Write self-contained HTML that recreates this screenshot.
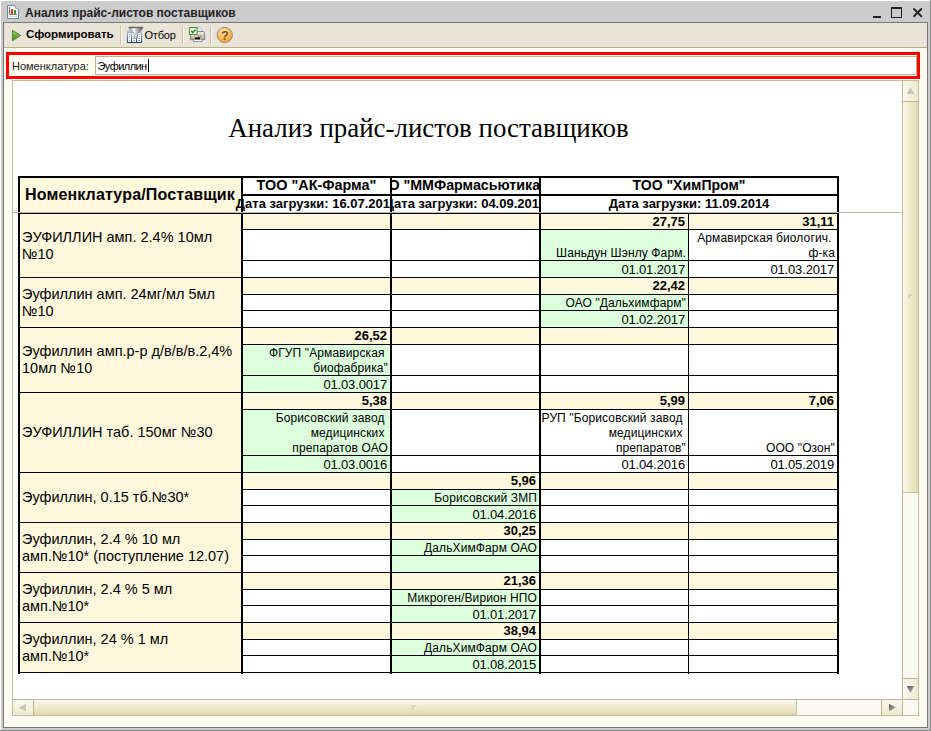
<!DOCTYPE html>
<html><head><meta charset="utf-8"><title>Анализ прайс-листов поставщиков</title>
<style>
*{box-sizing:border-box;margin:0;padding:0}
html,body{width:931px;height:731px;overflow:hidden;background:#cbcbcb;font-family:"Liberation Sans",sans-serif;color:#000}
#win{position:absolute;left:0;top:0;width:931px;height:731px;background:#cbcbcb}
#frame{position:absolute;left:3px;top:22px;width:925px;height:706px;background:#767676}
#form{position:absolute;left:4px;top:23px;width:923px;height:704px;background:#fffbf0}
#title{position:absolute;left:25px;top:6px;font:bold 12px "Liberation Sans",sans-serif;color:#222;white-space:nowrap;letter-spacing:0px}
#tb{position:absolute;left:4px;top:23px;width:923px;height:25px;background:#eae4d8;border-bottom:1px solid #b5af8c}
.sep{position:absolute;top:26px;width:2px;height:19px;border-left:1px solid #c9c2a9;border-right:1px solid #fbf9f2}
.tt{position:absolute;font-size:11px;white-space:nowrap;color:#000}
#red{position:absolute;left:6px;top:52px;width:914px;height:27px;border:3px solid #fd0000}
#inp{position:absolute;left:95px;top:56px;width:822px;height:19px;background:#fff;border:1px solid #b9b38f}
#sheet{position:absolute;left:12px;top:80px;width:907px;height:636px;background:#fff;border:1px solid #c4bd9c}
#sheet .abs,.c,.ln{position:absolute}
#tbl{position:absolute;left:0;top:0;width:931px;height:731px}
.c{overflow:hidden;white-space:nowrap}
.hc{text-align:center}
.h0{position:absolute;left:5px;top:8px;font:bold 16px "Liberation Sans",sans-serif;letter-spacing:0.15px}
.h1{font:bold 14px "Liberation Sans",sans-serif;line-height:16px;display:block;position:absolute;left:50%;top:-1px;transform:translateX(-50%)}
.h2{font:bold 13px "Liberation Sans",sans-serif;line-height:16px;display:block;position:absolute;left:50%;top:0px;transform:translateX(-50%)}
.labc{display:flex;align-items:center}
.lab{font-size:14.5px;line-height:17px;padding-left:2px}
.r{text-align:right;padding-right:3px}
.pr{font:bold 13px "Liberation Sans",sans-serif;line-height:16px;display:block}
.dt{font-size:13px;line-height:17px;display:block;letter-spacing:-0.15px}
.mnc{display:flex;align-items:flex-end;justify-content:flex-end}
.sl{position:absolute;background:#bcb694}
.sbtn{position:absolute}
.mn{font-size:12px;line-height:15px;text-align:right;padding-right:2px;letter-spacing:0.12px;position:relative;top:1px}
</style></head><body>
<div id="win">
<div style="position:absolute;left:0;top:0;width:931px;height:1px;background:#fff"></div><div style="position:absolute;left:0;top:0;width:1px;height:731px;background:#fff"></div><div style="position:absolute;left:930px;top:0;width:1px;height:731px;background:#8c8c8c"></div><div style="position:absolute;left:0;top:730px;width:931px;height:1px;background:#8c8c8c"></div><div id="frame"></div><div id="form"></div>
<div id="title">Анализ прайс-листов поставщиков</div>
<div id="tb"></div>
<svg style="position:absolute;left:0;top:0" width="931" height="50" viewBox="0 0 931 50">
<defs>
<linearGradient id="gplay" x1="0" y1="0" x2="0" y2="1"><stop offset="0" stop-color="#8ed45a"/><stop offset="1" stop-color="#3f8f1f"/></linearGradient>
<linearGradient id="gtab" x1="0" y1="0" x2="0" y2="1"><stop offset="0" stop-color="#c3d3ea"/><stop offset="0.5" stop-color="#6d8bbb"/><stop offset="1" stop-color="#1c3766"/></linearGradient>
<linearGradient id="gfun" x1="0" y1="0" x2="1" y2="0"><stop offset="0" stop-color="#8a8a8a"/><stop offset="0.35" stop-color="#ffffff"/><stop offset="0.6" stop-color="#b0b0b0"/><stop offset="1" stop-color="#555"/></linearGradient>
<radialGradient id="ghelp" cx="0.4" cy="0.3" r="0.8"><stop offset="0" stop-color="#fee3ae"/><stop offset="0.6" stop-color="#f9b84a"/><stop offset="1" stop-color="#f0a020"/></radialGradient>
<linearGradient id="gprn" x1="0" y1="0" x2="0" y2="1"><stop offset="0" stop-color="#f4f1ee"/><stop offset="1" stop-color="#b9a799"/></linearGradient>
</defs>
<!-- title icon -->
<path d="M7.5 5.5H15.5L18.5 8.5V18.5H7.5Z" fill="#fff" stroke="#6b87a8" stroke-width="1"/>
<path d="M15.5 5.5V8.5H18.5" fill="#dbe6f2" stroke="#9fb4cc" stroke-width="1"/>
<rect x="11" y="9" width="2" height="5" fill="#f0361a"/>
<rect x="14" y="10" width="2" height="4" fill="#2e9a1e"/>
<rect x="9" y="7" width="1" height="8" fill="#777"/>
<rect x="9" y="14" width="8" height="1" fill="#9a6a6a"/>
<rect x="9" y="16" width="8" height="1" fill="#c5d9ec"/>
<!-- window buttons -->
<rect x="873" y="16" width="8" height="2" fill="#222"/>
<rect x="891.5" y="8" width="10" height="9.5" fill="none" stroke="#222" stroke-width="1"/>
<rect x="891" y="7" width="11" height="2" fill="#222"/>
<path d="M914 9L921.3 16.2M921.3 9L914 16.2" stroke="#222" stroke-width="1.9" stroke-linecap="round"/>
<!-- play -->
<path d="M12.5 30.3V40.7L20.6 35.5Z" fill="url(#gplay)" stroke="#4c7a38" stroke-width="0.9" stroke-linejoin="round"/>
<!-- filter icon -->
<rect x="127" y="30" width="15" height="13" rx="0.8" fill="url(#gtab)"/>
<rect x="128" y="33" width="3" height="9" fill="#f4fbff"/>
<rect x="132" y="33" width="4" height="9" fill="#f4fbff"/>
<rect x="137" y="33" width="4" height="9" fill="#f4fbff"/>
<g fill="#9aa6c0"><rect x="129" y="34" width="1" height="1"/><rect x="129" y="36" width="1" height="1"/><rect x="129" y="38" width="1" height="1"/><rect x="129" y="40" width="1" height="1"/>
<rect x="139" y="34" width="1" height="1"/><rect x="139" y="36" width="1" height="1"/><rect x="138" y="38" width="2" height="1"/><rect x="138" y="40" width="2" height="1"/><rect x="133" y="40" width="2" height="1"/><rect x="133" y="38" width="1" height="1"/></g>
<path d="M129 27H143V28.3L137.6 33.5V38L134.2 38.8V33.5L129 28.3Z" fill="url(#gfun)" stroke="#666" stroke-width="0.6"/>
<rect x="129" y="27" width="14" height="1.2" fill="#6a6a6a"/>
<!-- printer icon -->
<rect x="198" y="28" width="3.4" height="6" fill="#eef4fb" stroke="#9db8d8" stroke-width="0.7"/>
<path d="M190.5 34H196.5L198 31.5H203.7L204.7 33V39.7H190.5Z" fill="url(#gprn)" stroke="#77777c" stroke-width="0.9"/>
<rect x="193.3" y="39" width="8.6" height="2.6" fill="#f6f6f6" stroke="#77777c" stroke-width="0.7"/>
<rect x="194.8" y="37.4" width="5.2" height="2" fill="#0a0a0a"/>
<rect x="197.8" y="35.3" width="1.4" height="1.4" fill="#e33"/>
<rect x="200" y="35.3" width="1.4" height="1.4" fill="#2a2"/>
<rect x="189.5" y="27.5" width="7.5" height="7" fill="#fff" stroke="#4a9a2a" stroke-width="1"/>
<path d="M191.2 30.8L192.8 32.6L195.6 29.4" fill="none" stroke="#2f8a1f" stroke-width="1.5"/>
<!-- help -->
<circle cx="224.8" cy="35" r="7.6" fill="url(#ghelp)" stroke="#8d7f73" stroke-width="0.9"/>
<text x="224.8" y="39.6" text-anchor="middle" font-family="Liberation Sans" font-weight="bold" font-size="12.5" fill="#7d4b1e">?</text>
</svg>
<div class="sep" style="left:120px"></div><div class="sep" style="left:182px"></div><div class="sep" style="left:210px"></div>
<div class="tt" style="left:26px;top:28px;font-weight:bold;font-size:11.5px;letter-spacing:0px">Сформировать</div>
<div class="tt" style="left:144.5px;top:29px;letter-spacing:-0.2px">Отбор</div>

<div id="red"></div><div id="inp"></div>
<div class="tt" style="left:12px;top:60px;color:#222">Номенклатура:</div>
<div class="tt" style="left:97.5px;top:60px;letter-spacing:-0.55px">Эуфиллин</div>
<div style="position:absolute;left:148px;top:59px;width:1px;height:13px;background:#000"></div>
<div id="sheet"></div>
<div id="tbl">
<div class="abs" style="position:absolute;left:228.3px;top:113px;font:26.9px 'Liberation Serif',serif;white-space:nowrap">Анализ прайс-листов поставщиков</div>
<div class="c" style="left:20px;top:178px;width:221px;height:35px;background:#fff8dc;"><div class="h0">Номенклатура/Поставщик</div></div>
<div class="c hc" style="left:243px;top:178px;width:147px;height:16px;background:#ffffff;"><span class="h1" style="font-size:14.4px;margin-left:0px">ТОО "АК-Фарма"</span></div>
<div class="c hc" style="left:243px;top:196px;width:147px;height:17px;background:#ffffff;"></div>
<div class="c hc" style="left:392px;top:178px;width:147px;height:16px;background:#ffffff;"><span class="h1" style="font-size:14.25px;margin-left:-3px">ТОО "ММФармасьютикал"</span></div>
<div class="c hc" style="left:392px;top:196px;width:147px;height:17px;background:#ffffff;"><span class="h2">Дата загрузки: 04.09.2014</span></div>
<div class="c hc" style="left:541px;top:178px;width:296px;height:16px;background:#ffffff;"><span class="h1" style="font-size:14px;margin-left:0px">ТОО "ХимПром"</span></div>
<div class="c hc" style="left:541px;top:196px;width:296px;height:17px;background:#ffffff;"><span class="h2">Дата загрузки: 11.09.2014</span></div>
<div class="c labc" style="left:20px;top:214px;width:221px;height:63px;background:#fff8dc;"><div class="lab">ЭУФИЛЛИН амп. 2.4% 10мл<br>№10</div></div>
<div class="c r" style="left:243px;top:214px;width:147px;height:15px;background:#fff8dc;"></div>
<div class="c mnc" style="left:243px;top:230px;width:147px;height:30px;background:#ffffff;"></div>
<div class="c r" style="left:243px;top:261px;width:147px;height:16px;background:#ffffff;"></div>
<div class="c r" style="left:392px;top:214px;width:147px;height:15px;background:#fff8dc;"></div>
<div class="c mnc" style="left:392px;top:230px;width:147px;height:30px;background:#ffffff;"></div>
<div class="c r" style="left:392px;top:261px;width:147px;height:16px;background:#ffffff;"></div>
<div class="c r" style="left:541px;top:214px;width:147px;height:15px;background:#fff8dc;"><span class="pr">27,75</span></div>
<div class="c mnc" style="left:541px;top:230px;width:147px;height:30px;background:#dcffdc;"><div class="mn">Шаньдун Шэнлу Фарм.</div></div>
<div class="c r" style="left:541px;top:261px;width:147px;height:16px;background:#dcffdc;"><span class="dt">01.01.2017</span></div>
<div class="c r" style="left:689px;top:214px;width:148px;height:15px;background:#fff8dc;"><span class="pr">31,11</span></div>
<div class="c mnc" style="left:689px;top:230px;width:148px;height:30px;background:#ffffff;"><div class="mn">Армавирская&nbsp;биологич.&nbsp;<br>ф-ка</div></div>
<div class="c r" style="left:689px;top:261px;width:148px;height:16px;background:#ffffff;"><span class="dt">01.03.2017</span></div>
<div class="c labc" style="left:20px;top:278px;width:221px;height:49px;background:#fff8dc;"><div class="lab">Эуфиллин амп. 24мг/мл 5мл<br>№10</div></div>
<div class="c r" style="left:243px;top:278px;width:147px;height:16px;background:#fff8dc;"></div>
<div class="c mnc" style="left:243px;top:295px;width:147px;height:15px;background:#ffffff;"></div>
<div class="c r" style="left:243px;top:311px;width:147px;height:16px;background:#ffffff;"></div>
<div class="c r" style="left:392px;top:278px;width:147px;height:16px;background:#fff8dc;"></div>
<div class="c mnc" style="left:392px;top:295px;width:147px;height:15px;background:#ffffff;"></div>
<div class="c r" style="left:392px;top:311px;width:147px;height:16px;background:#ffffff;"></div>
<div class="c r" style="left:541px;top:278px;width:147px;height:16px;background:#fff8dc;"><span class="pr">22,42</span></div>
<div class="c mnc" style="left:541px;top:295px;width:147px;height:15px;background:#dcffdc;"><div class="mn">ОАО "Дальхимфарм"</div></div>
<div class="c r" style="left:541px;top:311px;width:147px;height:16px;background:#dcffdc;"><span class="dt">01.02.2017</span></div>
<div class="c r" style="left:689px;top:278px;width:148px;height:16px;background:#fff8dc;"></div>
<div class="c mnc" style="left:689px;top:295px;width:148px;height:15px;background:#ffffff;"></div>
<div class="c r" style="left:689px;top:311px;width:148px;height:16px;background:#ffffff;"></div>
<div class="c labc" style="left:20px;top:328px;width:221px;height:64px;background:#fff8dc;"><div class="lab">Эуфиллин амп.р-р д/в/в/в.2,4%<br>10мл №10</div></div>
<div class="c r" style="left:243px;top:328px;width:147px;height:16px;background:#fff8dc;"><span class="pr">26,52</span></div>
<div class="c mnc" style="left:243px;top:345px;width:147px;height:30px;background:#dcffdc;"><div class="mn">ФГУП&nbsp;"Армавирская&nbsp;<br>биофабрика"</div></div>
<div class="c r" style="left:243px;top:376px;width:147px;height:16px;background:#dcffdc;"><span class="dt">01.03.0017</span></div>
<div class="c r" style="left:392px;top:328px;width:147px;height:16px;background:#fff8dc;"></div>
<div class="c mnc" style="left:392px;top:345px;width:147px;height:30px;background:#ffffff;"></div>
<div class="c r" style="left:392px;top:376px;width:147px;height:16px;background:#ffffff;"></div>
<div class="c r" style="left:541px;top:328px;width:147px;height:16px;background:#fff8dc;"></div>
<div class="c mnc" style="left:541px;top:345px;width:147px;height:30px;background:#ffffff;"></div>
<div class="c r" style="left:541px;top:376px;width:147px;height:16px;background:#ffffff;"></div>
<div class="c r" style="left:689px;top:328px;width:148px;height:16px;background:#fff8dc;"></div>
<div class="c mnc" style="left:689px;top:345px;width:148px;height:30px;background:#ffffff;"></div>
<div class="c r" style="left:689px;top:376px;width:148px;height:16px;background:#ffffff;"></div>
<div class="c labc" style="left:20px;top:393px;width:221px;height:79px;background:#fff8dc;"><div class="lab">ЭУФИЛЛИН таб. 150мг №30</div></div>
<div class="c r" style="left:243px;top:393px;width:147px;height:16px;background:#fff8dc;"><span class="pr">5,38</span></div>
<div class="c mnc" style="left:243px;top:410px;width:147px;height:45px;background:#dcffdc;"><div class="mn">Борисовский&nbsp;завод&nbsp;<br>медицинских&nbsp;<br>препаратов ОАО</div></div>
<div class="c r" style="left:243px;top:456px;width:147px;height:16px;background:#dcffdc;"><span class="dt">01.03.0016</span></div>
<div class="c r" style="left:392px;top:393px;width:147px;height:16px;background:#fff8dc;"></div>
<div class="c mnc" style="left:392px;top:410px;width:147px;height:45px;background:#ffffff;"></div>
<div class="c r" style="left:392px;top:456px;width:147px;height:16px;background:#ffffff;"></div>
<div class="c r" style="left:541px;top:393px;width:147px;height:16px;background:#fff8dc;"><span class="pr">5,99</span></div>
<div class="c mnc" style="left:541px;top:410px;width:147px;height:45px;background:#ffffff;"><div class="mn">РУП&nbsp;"Борисовский&nbsp;завод&nbsp;<br>медицинских&nbsp;<br>препаратов"</div></div>
<div class="c r" style="left:541px;top:456px;width:147px;height:16px;background:#ffffff;"><span class="dt">01.04.2016</span></div>
<div class="c r" style="left:689px;top:393px;width:148px;height:16px;background:#fff8dc;"><span class="pr">7,06</span></div>
<div class="c mnc" style="left:689px;top:410px;width:148px;height:45px;background:#ffffff;"><div class="mn">ООО "Озон"</div></div>
<div class="c r" style="left:689px;top:456px;width:148px;height:16px;background:#ffffff;"><span class="dt">01.05.2019</span></div>
<div class="c labc" style="left:20px;top:473px;width:221px;height:49px;background:#fff8dc;"><div class="lab">Эуфиллин, 0.15 тб.№30*</div></div>
<div class="c r" style="left:243px;top:473px;width:147px;height:16px;background:#fff8dc;"></div>
<div class="c mnc" style="left:243px;top:490px;width:147px;height:15px;background:#ffffff;"></div>
<div class="c r" style="left:243px;top:506px;width:147px;height:16px;background:#ffffff;"></div>
<div class="c r" style="left:392px;top:473px;width:147px;height:16px;background:#fff8dc;"><span class="pr">5,96</span></div>
<div class="c mnc" style="left:392px;top:490px;width:147px;height:15px;background:#dcffdc;"><div class="mn">Борисовский ЗМП</div></div>
<div class="c r" style="left:392px;top:506px;width:147px;height:16px;background:#dcffdc;"><span class="dt">01.04.2016</span></div>
<div class="c r" style="left:541px;top:473px;width:147px;height:16px;background:#fff8dc;"></div>
<div class="c mnc" style="left:541px;top:490px;width:147px;height:15px;background:#ffffff;"></div>
<div class="c r" style="left:541px;top:506px;width:147px;height:16px;background:#ffffff;"></div>
<div class="c r" style="left:689px;top:473px;width:148px;height:16px;background:#fff8dc;"></div>
<div class="c mnc" style="left:689px;top:490px;width:148px;height:15px;background:#ffffff;"></div>
<div class="c r" style="left:689px;top:506px;width:148px;height:16px;background:#ffffff;"></div>
<div class="c labc" style="left:20px;top:523px;width:221px;height:49px;background:#fff8dc;"><div class="lab">Эуфиллин, 2.4 % 10 мл<br>амп.№10* (поступление 12.07)</div></div>
<div class="c r" style="left:243px;top:523px;width:147px;height:16px;background:#fff8dc;"></div>
<div class="c mnc" style="left:243px;top:540px;width:147px;height:15px;background:#ffffff;"></div>
<div class="c r" style="left:243px;top:556px;width:147px;height:16px;background:#ffffff;"></div>
<div class="c r" style="left:392px;top:523px;width:147px;height:16px;background:#fff8dc;"><span class="pr">30,25</span></div>
<div class="c mnc" style="left:392px;top:540px;width:147px;height:15px;background:#dcffdc;"><div class="mn">ДальХимФарм ОАО</div></div>
<div class="c r" style="left:392px;top:556px;width:147px;height:16px;background:#dcffdc;"></div>
<div class="c r" style="left:541px;top:523px;width:147px;height:16px;background:#fff8dc;"></div>
<div class="c mnc" style="left:541px;top:540px;width:147px;height:15px;background:#ffffff;"></div>
<div class="c r" style="left:541px;top:556px;width:147px;height:16px;background:#ffffff;"></div>
<div class="c r" style="left:689px;top:523px;width:148px;height:16px;background:#fff8dc;"></div>
<div class="c mnc" style="left:689px;top:540px;width:148px;height:15px;background:#ffffff;"></div>
<div class="c r" style="left:689px;top:556px;width:148px;height:16px;background:#ffffff;"></div>
<div class="c labc" style="left:20px;top:573px;width:221px;height:49px;background:#fff8dc;"><div class="lab">Эуфиллин, 2.4 % 5 мл<br>амп.№10*</div></div>
<div class="c r" style="left:243px;top:573px;width:147px;height:16px;background:#fff8dc;"></div>
<div class="c mnc" style="left:243px;top:590px;width:147px;height:15px;background:#ffffff;"></div>
<div class="c r" style="left:243px;top:606px;width:147px;height:16px;background:#ffffff;"></div>
<div class="c r" style="left:392px;top:573px;width:147px;height:16px;background:#fff8dc;"><span class="pr">21,36</span></div>
<div class="c mnc" style="left:392px;top:590px;width:147px;height:15px;background:#dcffdc;"><div class="mn">Микроген/Вирион НПО</div></div>
<div class="c r" style="left:392px;top:606px;width:147px;height:16px;background:#dcffdc;"><span class="dt">01.01.2017</span></div>
<div class="c r" style="left:541px;top:573px;width:147px;height:16px;background:#fff8dc;"></div>
<div class="c mnc" style="left:541px;top:590px;width:147px;height:15px;background:#ffffff;"></div>
<div class="c r" style="left:541px;top:606px;width:147px;height:16px;background:#ffffff;"></div>
<div class="c r" style="left:689px;top:573px;width:148px;height:16px;background:#fff8dc;"></div>
<div class="c mnc" style="left:689px;top:590px;width:148px;height:15px;background:#ffffff;"></div>
<div class="c r" style="left:689px;top:606px;width:148px;height:16px;background:#ffffff;"></div>
<div class="c labc" style="left:20px;top:623px;width:221px;height:49px;background:#fff8dc;"><div class="lab">Эуфиллин, 24 % 1 мл<br>амп.№10*</div></div>
<div class="c r" style="left:243px;top:623px;width:147px;height:16px;background:#fff8dc;"></div>
<div class="c mnc" style="left:243px;top:640px;width:147px;height:15px;background:#ffffff;"></div>
<div class="c r" style="left:243px;top:656px;width:147px;height:16px;background:#ffffff;"></div>
<div class="c r" style="left:392px;top:623px;width:147px;height:16px;background:#fff8dc;"><span class="pr">38,94</span></div>
<div class="c mnc" style="left:392px;top:640px;width:147px;height:15px;background:#dcffdc;"><div class="mn">ДальХимФарм ОАО</div></div>
<div class="c r" style="left:392px;top:656px;width:147px;height:16px;background:#dcffdc;"><span class="dt">01.08.2015</span></div>
<div class="c r" style="left:541px;top:623px;width:147px;height:16px;background:#fff8dc;"></div>
<div class="c mnc" style="left:541px;top:640px;width:147px;height:15px;background:#ffffff;"></div>
<div class="c r" style="left:541px;top:656px;width:147px;height:16px;background:#ffffff;"></div>
<div class="c r" style="left:689px;top:623px;width:148px;height:16px;background:#fff8dc;"></div>
<div class="c mnc" style="left:689px;top:640px;width:148px;height:15px;background:#ffffff;"></div>
<div class="c r" style="left:689px;top:656px;width:148px;height:16px;background:#ffffff;"></div>
<div class="ln" style="left:18px;top:176px;width:2px;height:498px;background:#000"></div>
<div class="ln" style="left:241px;top:176px;width:2px;height:498px;background:#000"></div>
<div class="ln" style="left:390px;top:176px;width:2px;height:498px;background:#000"></div>
<div class="ln" style="left:539px;top:176px;width:2px;height:498px;background:#000"></div>
<div class="ln" style="left:688px;top:213px;width:1px;height:461px;background:#000"></div>
<div class="ln" style="left:837px;top:176px;width:2px;height:498px;background:#000"></div>
<div class="ln" style="left:18px;top:176px;width:821px;height:2px;background:#000"></div>
<div class="ln" style="left:243px;top:194px;width:596px;height:2px;background:#000"></div>
<div class="ln" style="left:18px;top:213px;width:821px;height:1px;background:#000"></div>
<div class="ln" style="left:243px;top:229px;width:596px;height:1px;background:#000"></div>
<div class="ln" style="left:243px;top:260px;width:596px;height:1px;background:#000"></div>
<div class="ln" style="left:18px;top:277px;width:821px;height:1px;background:#000"></div>
<div class="ln" style="left:243px;top:294px;width:596px;height:1px;background:#000"></div>
<div class="ln" style="left:243px;top:310px;width:596px;height:1px;background:#000"></div>
<div class="ln" style="left:18px;top:327px;width:821px;height:1px;background:#000"></div>
<div class="ln" style="left:243px;top:344px;width:596px;height:1px;background:#000"></div>
<div class="ln" style="left:243px;top:375px;width:596px;height:1px;background:#000"></div>
<div class="ln" style="left:18px;top:392px;width:821px;height:1px;background:#000"></div>
<div class="ln" style="left:243px;top:409px;width:596px;height:1px;background:#000"></div>
<div class="ln" style="left:243px;top:455px;width:596px;height:1px;background:#000"></div>
<div class="ln" style="left:18px;top:472px;width:821px;height:1px;background:#000"></div>
<div class="ln" style="left:243px;top:489px;width:596px;height:1px;background:#000"></div>
<div class="ln" style="left:243px;top:505px;width:596px;height:1px;background:#000"></div>
<div class="ln" style="left:18px;top:522px;width:821px;height:1px;background:#000"></div>
<div class="ln" style="left:243px;top:539px;width:596px;height:1px;background:#000"></div>
<div class="ln" style="left:243px;top:555px;width:596px;height:1px;background:#000"></div>
<div class="ln" style="left:18px;top:572px;width:821px;height:1px;background:#000"></div>
<div class="ln" style="left:243px;top:589px;width:596px;height:1px;background:#000"></div>
<div class="ln" style="left:243px;top:605px;width:596px;height:1px;background:#000"></div>
<div class="ln" style="left:18px;top:622px;width:821px;height:1px;background:#000"></div>
<div class="ln" style="left:243px;top:639px;width:596px;height:1px;background:#000"></div>
<div class="ln" style="left:243px;top:655px;width:596px;height:1px;background:#000"></div>
<div class="ln" style="left:18px;top:672px;width:821px;height:1px;background:#000"></div>
<div class="c hc" style="left:230px;top:196px;width:160px;height:16px;background:transparent"><span class="h2" style="left:86.5px">Дата загрузки: 16.07.2014</span></div>
<div class="ln" style="left:13px;top:212px;width:890px;height:1px;background:#c4bd9c"></div>
</div>
<div id="sb">
<!-- vertical -->
<div class="sl" style="left:902px;top:81px;width:1px;height:619px"></div>
<div class="sbtn" style="left:903px;top:81px;width:15px;height:20px;background:linear-gradient(90deg,#faf9f1,#ece8cf)"></div>
<div class="sl" style="left:903px;top:101px;width:15px;height:1px"></div>
<div class="sbtn" style="left:903px;top:102px;width:15px;height:390px;background:linear-gradient(90deg,#fbf9ef 0%,#eee9ca 50%,#dfd8b0 100%)"></div>
<div class="sbtn" style="left:903px;top:492px;width:15px;height:186px;background:#f9f8f3;border-top:1px solid #c9c3a5"></div>
<div class="sl" style="left:903px;top:678px;width:15px;height:1px"></div>
<div class="sbtn" style="left:903px;top:679px;width:15px;height:20px;background:linear-gradient(90deg,#faf9f1,#ece8cf)"></div>
<!-- horizontal -->
<div class="sl" style="left:13px;top:699px;width:905px;height:1px"></div>
<div class="sbtn" style="left:13px;top:700px;width:20px;height:15px;background:linear-gradient(180deg,#faf9f1,#ece8cf)"></div>
<div class="sl" style="left:33px;top:700px;width:1px;height:15px"></div>
<div class="sbtn" style="left:34px;top:700px;width:762px;height:15px;background:linear-gradient(180deg,#fbf9ef 0%,#eee9ca 50%,#dfd8b0 100%)"></div>
<div class="sbtn" style="left:796px;top:700px;width:85px;height:15px;background:#f9f8f3;border-left:1px solid #c9c3a5"></div>
<div class="sl" style="left:881px;top:700px;width:1px;height:15px"></div>
<div class="sbtn" style="left:882px;top:700px;width:20px;height:15px;background:linear-gradient(180deg,#faf9f1,#ece8cf)"></div>
<div class="sl" style="left:902px;top:700px;width:1px;height:15px"></div>
<div class="sbtn" style="left:903px;top:700px;width:15px;height:15px;background:#f9f8f3"></div>
<svg style="position:absolute;left:0;top:0" width="931" height="731">
<defs><linearGradient id="ga" x1="0" y1="0" x2="1" y2="1"><stop offset="0" stop-color="#5a5a5a"/><stop offset="1" stop-color="#bdbdbd"/></linearGradient></defs>
<path d="M910.5 87L914.2 94H906.8Z" fill="#c9c6b6"/>
<path d="M906.8 686H914.2L910.5 693Z" fill="url(#ga)"/>
<path d="M19 707.5L26 703.8V711.2Z" fill="#c9c6b6"/>
<path d="M889 703.8L896 707.5L889 711.2Z" fill="url(#ga)"/>
<circle cx="910.4" cy="296.4" r="2.3" fill="#cdc9b4"/><circle cx="911.1" cy="297.1" r="1.7" fill="#f2edd2"/>
<circle cx="414.3" cy="707.3" r="2.3" fill="#cdc9b4"/><circle cx="415" cy="708" r="1.7" fill="#f2edd2"/>
</svg>
</div>

</div>
</body></html>
